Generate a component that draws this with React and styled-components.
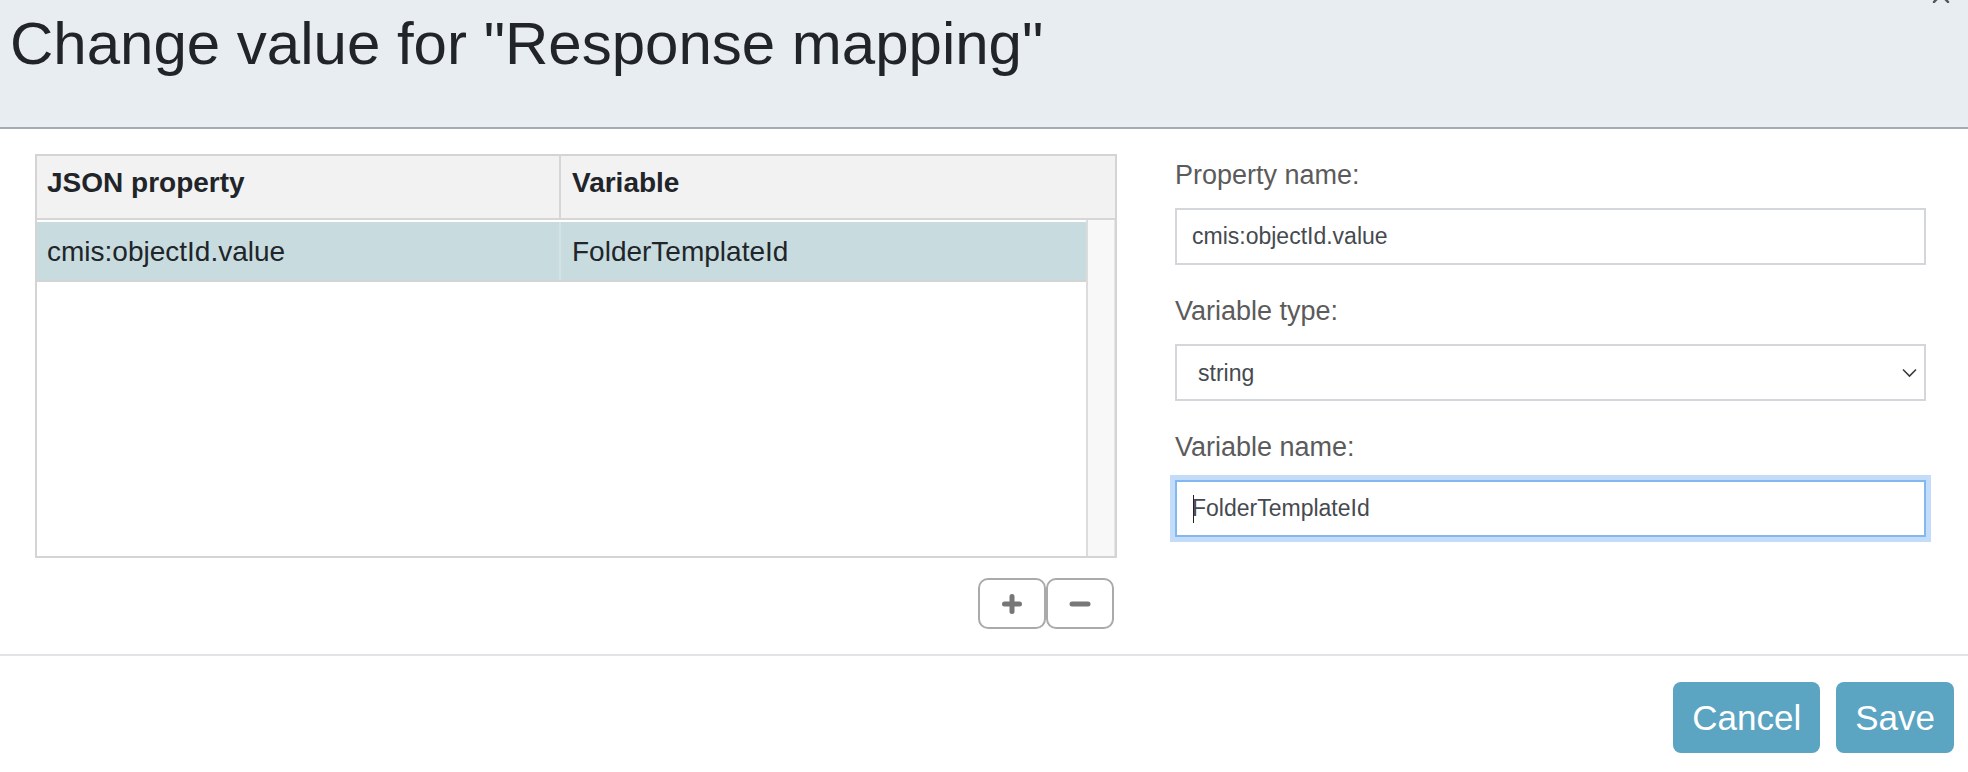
import React from "react";
import styled, { createGlobalStyle, css } from "styled-components";

const Global = createGlobalStyle`
  html, body { margin: 0; padding: 0; background: #ffffff; }
  body { font-family: "Liberation Sans", Arial, Helvetica, sans-serif; }
  * { box-sizing: border-box; }
`;

const Modal = styled.div`
  width: 100%;
  display: flex;
  flex-direction: column;
  background: #ffffff;
`;

const Header = styled.header`
  position: relative;
  height: 129px;
  padding: 8px 12px 0 10px;
  background: #e8edf1;
  border-bottom: 2px solid #a3acb6;
`;

const Title = styled.h1`
  margin: 0;
  font-size: 60px;
  line-height: 72px;
  font-weight: 400;
  color: #212529;
  white-space: nowrap;
`;

const CloseMark = styled.svg`
  position: absolute;
  top: -14px;
  left: 1932px;
`;

const Body = styled.div`
  display: flex;
  gap: 58px;
  padding: 25px 42px 25px 35px;
`;

const LeftCol = styled.div`
  width: 1082px;
  display: flex;
  flex-direction: column;
`;

const Table = styled.div`
  height: 404px;
  border: 2px solid #d4d4d4;
  display: flex;
  flex-direction: column;
`;

const HeadRow = styled.div`
  display: grid;
  grid-template-columns: 522px 1fr;
  height: 64px;
  background: #f2f2f2;
  border-bottom: 2px solid #d6d6d6;
`;

const HeadCell = styled.div`
  padding: 11px 10px 0 ${(p) => (p.$divided ? "11px" : "10px")};
  font-size: 28px;
  line-height: 32px;
  font-weight: 700;
  color: #212529;
  ${(p) => p.$divided && css`border-left: 2px solid #d6d6d6;`}
`;

const TableBody = styled.div`
  flex: 1;
  display: flex;
  min-height: 0;
`;

const Rows = styled.div`
  flex: 1;
  padding-top: 2px;
`;

const Scrollbar = styled.div`
  width: 29px;
  background: #f8f8f8;
  border-left: 2px solid #dcdcdc;
  border-right: 1px solid #e6e6e6;
`;

const DataRow = styled.div`
  display: grid;
  grid-template-columns: 522px 1fr;
  height: 60px;
  background: ${(p) => (p.$selected ? "#c8dce0" : "#ffffff")};
  border-bottom: 2px solid #d4d4d4;
`;

const DataCell = styled.div`
  padding: 14px 10px 0 ${(p) => (p.$divided ? "11px" : "10px")};
  font-size: 28px;
  line-height: 32px;
  color: #212529;
  white-space: nowrap;
  ${(p) => p.$divided && css`border-left: 2px solid #d5e2e5;`}
`;

const ToolRow = styled.div`
  display: flex;
  justify-content: flex-end;
  margin-top: 20px;
  padding-right: 3px;
`;

const IconButton = styled.button`
  width: 68px;
  height: 51px;
  padding: 0;
  display: flex;
  align-items: center;
  justify-content: center;
  background: #ffffff;
  border: 2px solid #a9abaa;
  border-radius: 10px;
  cursor: pointer;
`;

const RightCol = styled.div`
  width: 751px;
  padding-top: 5px;
  display: flex;
  flex-direction: column;
  gap: 30px;
`;

const Field = styled.div`
  display: flex;
  flex-direction: column;
`;

const Label = styled.label`
  display: block;
  font-size: 27px;
  line-height: 32px;
  color: #5b5b5b;
  margin-bottom: 17px;
`;

const controlBase = css`
  width: 100%;
  height: 57px;
  margin: 0;
  border: 2px solid #d3d7dc;
  border-radius: 0;
  background: #ffffff;
  font-family: "Liberation Sans", Arial, Helvetica, sans-serif;
  font-size: 23px;
  color: #464a4f;
  outline: none;
  caret-color: transparent;
`;

const TextInput = styled.input`
  ${controlBase};
  padding: 0 15px;
  ${(p) =>
    p.$focused &&
    css`
      border-color: #82b7ef;
      box-shadow: 0 0 0 5px #c3dcf9;
    `}
`;

const ControlWrap = styled.div`
  position: relative;
`;

const Select = styled.select`
  ${controlBase};
  padding: 0 40px 0 21px;
  appearance: none;
  -webkit-appearance: none;
`;

const Chevron = styled.svg`
  position: absolute;
  right: 9px;
  top: 50%;
  transform: translateY(-50%);
  pointer-events: none;
`;

const Caret = styled.span`
  position: absolute;
  left: 18px;
  top: 15px;
  width: 1px;
  height: 28px;
  background: #222;
`;

const Footer = styled.footer`
  display: flex;
  justify-content: flex-end;
  gap: 16px;
  padding: 26px 14px 19px;
  border-top: 2px solid #e1e3e6;
`;

const PrimaryButton = styled.button`
  height: 71px;
  padding: 0 19px;
  border: none;
  border-radius: 8px;
  background: #5ba4c2;
  color: #ffffff;
  font-family: "Liberation Sans", Arial, Helvetica, sans-serif;
  font-size: 35px;
  cursor: pointer;
`;

const PlusIcon = () => (
  <svg width="20" height="20" viewBox="0 0 20 20">
    <path d="M10 2.5v15M2.5 10h15" stroke="#777" strokeWidth="5" strokeLinecap="round" />
  </svg>
);

const MinusIcon = () => (
  <svg width="22" height="20" viewBox="0 0 22 20">
    <path d="M3 10h16" stroke="#777" strokeWidth="5" strokeLinecap="round" />
  </svg>
);

export default function App() {
  return (
    <>
      <Global />
      <Modal>
        <Header>
          <Title>Change value for "Response mapping"</Title>
          <CloseMark width="18" height="17" viewBox="0 0 18 17">
            <path d="M2 1l14 15M16 1L2 16" stroke="#555" strokeWidth="2.5" strokeLinecap="round" />
          </CloseMark>
        </Header>
        <Body>
          <LeftCol>
            <Table>
              <HeadRow>
                <HeadCell>JSON property</HeadCell>
                <HeadCell $divided>Variable</HeadCell>
              </HeadRow>
              <TableBody>
                <Rows>
                  <DataRow $selected>
                    <DataCell>cmis:objectId.value</DataCell>
                    <DataCell $divided>FolderTemplateId</DataCell>
                  </DataRow>
                </Rows>
                <Scrollbar />
              </TableBody>
            </Table>
            <ToolRow>
              <IconButton aria-label="Add">
                <PlusIcon />
              </IconButton>
              <IconButton aria-label="Remove">
                <MinusIcon />
              </IconButton>
            </ToolRow>
          </LeftCol>
          <RightCol>
            <Field>
              <Label>Property name:</Label>
              <TextInput readOnly value="cmis:objectId.value" />
            </Field>
            <Field>
              <Label>Variable type:</Label>
              <ControlWrap>
                <Select defaultValue="string">
                  <option value="string">string</option>
                  <option value="integer">integer</option>
                  <option value="boolean">boolean</option>
                </Select>
                <Chevron width="15" height="9" viewBox="0 0 15 9">
                  <path d="M1 1l6.5 6.5L14 1" fill="none" stroke="#3a3a3a" strokeWidth="1.6" />
                </Chevron>
              </ControlWrap>
            </Field>
            <Field>
              <Label>Variable name:</Label>
              <ControlWrap>
                <TextInput $focused readOnly value="FolderTemplateId" />
                <Caret />
              </ControlWrap>
            </Field>
          </RightCol>
        </Body>
        <Footer>
          <PrimaryButton>Cancel</PrimaryButton>
          <PrimaryButton>Save</PrimaryButton>
        </Footer>
      </Modal>
    </>
  );
}
